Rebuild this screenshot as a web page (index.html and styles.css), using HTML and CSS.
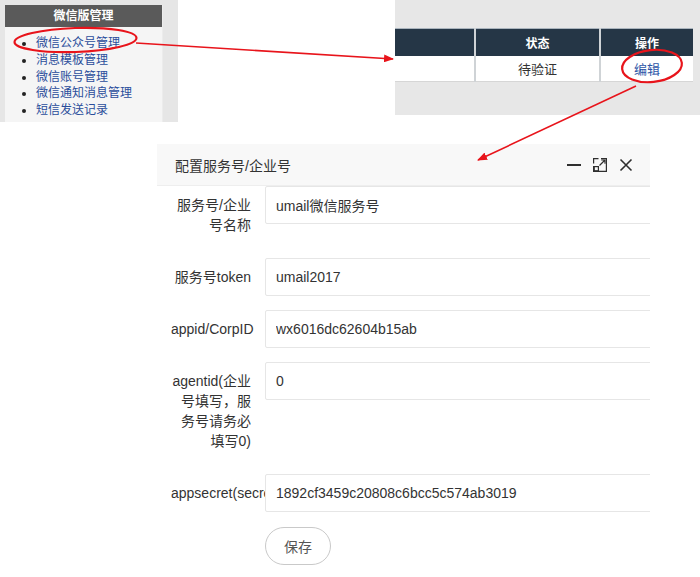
FILE: index.html
```html
<!DOCTYPE html>
<html lang="zh-CN">
<head>
<meta charset="utf-8">
<title>配置服务号/企业号</title>
<link rel="stylesheet" href="styles.css">
</head>
<body>
<div class="page">
  <div class="top">
    <div class="menu-wrap">
      <div class="menu">
        <div class="menu-head">微信版管理</div>
        <ul class="menu-list">
          <li><a href="#">微信公众号管理</a></li>
          <li><a href="#">消息模板管理</a></li>
          <li><a href="#">微信账号管理</a></li>
          <li><a href="#">微信通知消息管理</a></li>
          <li><a href="#">短信发送记录</a></li>
        </ul>
      </div>
    </div>
    <div class="table-wrap">
      <table class="grid">
        <tr><th class="c1"></th><th class="c2">状态</th><th class="c3">操作</th></tr>
        <tr><td class="c1"></td><td class="c2">待验证</td><td class="c3"><a href="#">编辑</a></td></tr>
      </table>
    </div>
  </div>

  <div class="dialog">
    <div class="dlg-head">
      <span class="dlg-title">配置服务号/企业号</span>
      <span class="dlg-tools">
        <svg class="ico" width="16" height="16" viewBox="0 0 16 16"><rect x="1" y="7" width="14" height="2" fill="#2f2f2f"/></svg>
        <svg class="ico" width="16" height="16" viewBox="0 0 16 16" fill="none" stroke="#2f2f2f" stroke-width="1.2"><path d="M9 1.6H14.4V14.4H1.6V9"/><path d="M1.6 6.5V1.6H6.5"/><rect x="2.2" y="9.6" width="4.2" height="4.2"/><path d="M7.5 8.5L13 3M9.2 3H13V6.8"/></svg>
        <svg class="ico" width="16" height="16" viewBox="0 0 16 16" fill="none" stroke="#2f2f2f" stroke-width="1.6"><path d="M2.5 2.5L13.5 13.5M13.5 2.5L2.5 13.5"/></svg>
      </span>
    </div>
    <form class="form">
      <div class="item">
        <label class="lbl">服务号/企业号名称</label>
        <div class="field"><input class="inp" type="text" value="umail微信服务号"></div>
      </div>
      <div class="item">
        <label class="lbl">服务号token</label>
        <div class="field"><input class="inp" type="text" value="umail2017"></div>
      </div>
      <div class="item">
        <label class="lbl">appid/CorpID</label>
        <div class="field"><input class="inp" type="text" value="wx6016dc62604b15ab"></div>
      </div>
      <div class="item">
        <label class="lbl">agentid(企业号填写，服务号请务必填写0)</label>
        <div class="field"><input class="inp" type="text" value="0"></div>
      </div>
      <div class="item">
        <label class="lbl nowrap">appsecret(secret)</label>
        <div class="field"><input class="inp" type="text" value="1892cf3459c20808c6bcc5c574ab3019"></div>
      </div>
      <div class="item">
        <div class="field btn-row"><button type="button" class="btn">保存</button></div>
      </div>
    </form>
  </div>

  <svg class="marks" width="700" height="577" viewBox="0 0 700 577">
    <defs>
      <marker id="ah" markerWidth="10" markerHeight="8" refX="9" refY="4" orient="auto" markerUnits="userSpaceOnUse">
        <path d="M0 0L10 4L0 8Z" fill="#e8141b"/>
      </marker>
    </defs>
    <ellipse cx="75.5" cy="40" rx="61" ry="12" fill="none" stroke="#e8141b" stroke-width="2.2" transform="rotate(-2 75.5 40)"/>
    <line x1="136" y1="43" x2="393" y2="59" stroke="#e8141b" stroke-width="1.6" marker-end="url(#ah)"/>
    <ellipse cx="652" cy="66" rx="30" ry="16" fill="none" stroke="#e8141b" stroke-width="2.2" transform="rotate(-6 652 66)"/>
    <line x1="636" y1="86" x2="478" y2="160" stroke="#e8141b" stroke-width="1.6" marker-end="url(#ah)"/>
  </svg>
</div>
</body>
</html>
```
FILE: styles.css
```css
* { box-sizing: border-box; }
html, body { margin: 0; padding: 0; background: #fff; }
body {
  font-family: "Liberation Sans", Arial, "Noto Sans CJK SC", sans-serif;
  color: #333;
}
.page {
  position: relative;
  width: 700px;
  height: 577px;
  overflow: hidden;
}
.top {
  display: flex;
  justify-content: space-between;
  align-items: flex-start;
}
.menu-wrap {
  width: 178px;
  height: 122px;
  background: #e6e6e6;
  padding: 5px 0 0 5px;
}
.menu {
  width: 158px;
  height: 117px;
  background: #f5f5f5;
  border-right: 1px solid #ececec;
}
.menu-head {
  height: 22px;
  line-height: 22px;
  background: #5a5a5a;
  color: #fff;
  font-size: 12px;
  font-weight: bold;
  text-align: center;
}
.menu-list {
  margin: 0;
  padding: 8px 0 0 31px;
  list-style: disc;
  font-size: 12px;
  line-height: 16.8px;
  color: #222;
}
.menu-list a { color: #2a4d9b; text-decoration: none; }

.table-wrap {
  width: 305px;
  height: 115px;
  background: #e7e7e7;
  padding: 28px 7px 0 0;
}
.grid {
  width: 298px;
  border-collapse: collapse;
  font-size: 12px;
}
.grid th {
  height: 27px;
  background: #253646;
  color: #fff;
  font-weight: bold;
  border-top: 1px solid #aab4bd;
  text-align: center;
  padding: 0;
}
.grid td {
  height: 26px;
  background: #fff;
  color: #333;
  text-align: center;
  border-bottom: 1px solid #d6d6d6;
  padding: 0;
  font-size: 13px;
}
.grid .c1 { width: 80px; border-right: 2px solid #cfd3d6; }
.grid .c2 { width: 125px; border-right: 2px solid #cfd3d6; }
.grid .c3 { width: 93px; }
.grid td a { color: #2d55a7; text-decoration: none; }

.dialog {
  margin: 22px 0 0 157px;
  width: 493px;
  overflow: hidden;
}
.dlg-head {
  height: 42px;
  background: #f8f8f8;
  border-bottom: 1px solid #eee;
  display: flex;
  align-items: center;
  justify-content: space-between;
  padding: 0 16px 0 18px;
}
.dlg-title { font-size: 14px; color: #333; }
.dlg-tools { display: flex; align-items: center; gap: 10px; }
.ico { display: block; }

.form { margin: 0; padding: 0; }
.item {
  display: flex;
  align-items: flex-start;
  margin-bottom: 14px;
}
.lbl {
  flex: 0 0 108px;
  width: 108px;
  padding: 9px 14px;
  line-height: 20px;
  font-size: 14px;
  text-align: right;
  color: #333;
  overflow: hidden;
}
.lbl.nowrap { white-space: nowrap; text-align: left; }
.field { flex: 0 0 420px; }
.btn-row { margin-left: 108px; margin-top: 1px; }
.inp {
  display: block;
  width: 420px;
  height: 38px;
  border: 1px solid #e6e6e6;
  border-radius: 2px;
  padding: 0 10px;
  font-family: inherit;
  font-size: 14px;
  color: #333;
  background: #fff;
  outline: none;
}
.btn {
  height: 38px;
  padding: 0 18px;
  border: 1px solid #c9c9c9;
  border-radius: 100px;
  background: #fff;
  color: #555;
  font-family: inherit;
  font-size: 14px;
}
.marks {
  position: absolute;
  left: 0;
  top: 0;
  pointer-events: none;
}
```
